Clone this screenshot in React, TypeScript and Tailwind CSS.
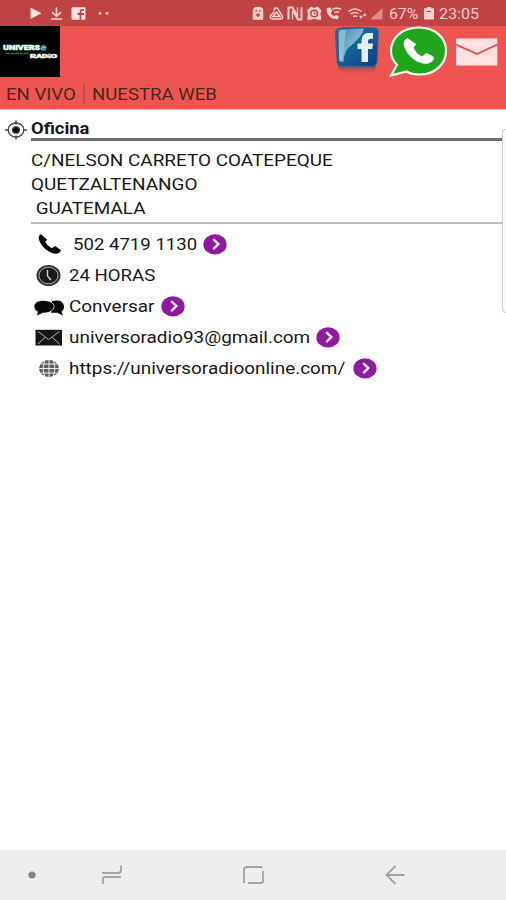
import React from 'react';

function Wide({ children, className = '', tight = false }: { children: React.ReactNode; className?: string; tight?: boolean }) {
  return (
    <span className={`block shrink-0 whitespace-pre ${className}`}>
      <span className={`inline-block origin-left ${tight ? 'scale-x-[1.094]' : 'scale-x-[1.113]'}`}>{children}</span>
    </span>
  );
}

function Arrow() {
  return (
    <svg className="h-[22px] w-6 shrink-0" viewBox="0 0 24 22" fill="none">
      <ellipse cx="12" cy="10.400" rx="11.6" ry="10.2" fill="#8e1a9f" />
      <path d="M10.2 5.2 15.4 10.100 10.2 15.2" stroke="#f4e6f6" strokeWidth="2.4" />
    </svg>
  );
}

function StatusBar() {
  return (
    <div className="flex h-[26px] items-center bg-[#bf4342] text-[#f5cfcd]">
      <svg className="h-[26px] w-[120px] shrink-0" viewBox="0 0 120 26" fill="none">
        <path d="M30.500 7.500V19L41.500 13.300Z" fill="#fbe3e1" />
        <path d="M56.500 7.500V16M52 12l4.500 4.300L61 12M51 19h11" stroke="#f5cfcd" strokeWidth="1.700" />
        <rect x="71.500" y="7.300" width="14" height="12.400" rx="1" fill="#fbe3e1" />
        <path d="M84 9.800h-1.500q-2 0-2 2V19.700M77.500 14H84" stroke="#bf4342" strokeWidth="1.800" />
        <circle cx="100" cy="13.300" r="1.500" fill="#efb8b5" />
        <circle cx="107" cy="13.300" r="1.500" fill="#efb8b5" />
      </svg>
      <svg className="ml-[130px] h-[26px] w-[136px] shrink-0" viewBox="250 0 136 26" fill="none" stroke="#f5cfcd" strokeWidth="1.500">
        <path d="M253.500 19V10.500q0-3 4.500-3t4.500 3V19Z" fill="#f5cfcd" />
        <path d="M255.500 11h1.500M259 11h1.500M258 13v4M256 15h4" stroke="#bf4342" />
        <path d="M274 10.500q0-2.500 2.300-2.500t2.300 2.500l3.800 5.500q.8 3-2.400 3h-7.500q-3-.4-2-3l3.800-4.500M273 16.500l3.500-4.500 3.500 4.500Z" />
        <path d="M288.500 19.500V7.500h4l5 9M301.500 7.500v12h-3.500l-5-9" strokeWidth="2" />
        <path d="M297.500 7.500v9M292.500 10.500v9" strokeWidth="1.300" />
        <path d="M308 10.500l3-3 2 1h2.500l2-1 3 3-.7 2v2.500l.7 4h-3l-1.500-.7h-3.500L311 19h-3l.5-4V12.500Z" fill="#f5cfcd" />
        <circle cx="314.200" cy="13.500" r="3.300" fill="#f5cfcd" stroke="#bf4342" />
        <path d="M314.200 11.500v2.300h2" stroke="#bf4342" strokeWidth="1" />
        <path d="M326.500 8q0 10.500 11 11.500l1.500-3.300-3-1.500-1.700 1.300q-3-1-3.500-3.500l1.500-1.400-1.800-3.600Z" fill="#f5cfcd" stroke="none" />
        <path d="M332.500 9.500q4-2.500 8.500 0M334.500 12.300q2.200-1.200 4.500 0" />
        <path d="M348.500 11.500q6.500-5 13 0M350.500 14q4.500-3 8 0M353 16.500q2-1.200 4 0" />
        <path d="m359.500 16 1.500 2.700 1.500-2.700ZM363.200 15.800l1.500-2.700 1.500 2.700Z" fill="#f5cfcd" strokeWidth=".5" />
        <path d="M382.500 8v11.500H370Z" fill="#dc8b88" stroke="none" />
      </svg>
      <span className="ml-[3px] w-[34px] whitespace-nowrap text-[15px] leading-[26px]">
        <span className="relative top-px inline-block origin-left scale-x-[1.05]">67%</span>
      </span>
      <svg className="h-[26px] w-3 shrink-0" viewBox="0 0 12 26">
        <path d="M3.800 7h4.400v1.200h2.800V19.500h-10V8.200h2.800Z" fill="#f5cfcd" />
        <path d="M4 11.500h4" stroke="#bf4342" />
      </svg>
      <span className="ml-1 whitespace-nowrap text-[15px] leading-[26px]">
        <span className="relative top-px inline-block origin-left scale-x-[1.07]">23:05</span>
      </span>
    </div>
  );
}

function Header() {
  return (
    <header className="h-[84px] border-b border-[#f0c5c2] bg-[#ee5551]">
      <div className="flex h-[52px]">
        <svg className="h-[51px] w-[60px] shrink-0 bg-black" viewBox="0 0 60 51">
          <g fontFamily="Roboto" fontWeight="900">
            <text x="3" y="24" fontSize="6.500" fill="#dfffee" stroke="#dfffee" strokeWidth=".5" textLength="37" lengthAdjust="spacingAndGlyphs">UNIVERS</text>
            <text x="30" y="31.500" fontSize="5.500" fill="#f5f8ee" stroke="#f5f8ee" strokeWidth=".5" textLength="27" lengthAdjust="spacingAndGlyphs">RADIO</text>
          </g>
          <circle cx="43.500" cy="22" r="3" fill="#2794aa" />
          <path d="M41 23.500q2-4 5-2" stroke="#9bded9" fill="none" />
          <path d="M6 27.500h23" stroke="#237b42" strokeWidth="1.700" strokeDasharray="4 .5" />
          <circle cx="49.500" cy="29" r="1.200" fill="#d4a349" />
        </svg>
        <svg className="ml-[274px] h-[52px] w-[50px] shrink-0" viewBox="333 26 50 52">
          <defs>
            <linearGradient id="fb" x1="0" y1="0" x2="1" y2="1">
              <stop offset="0" stopColor="#285f88" />
              <stop offset=".45" stopColor="#16639c" />
              <stop offset="1" stopColor="#073b83" />
            </linearGradient>
            <linearGradient id="shine" x1="0" y1="0" x2="1" y2="1">
              <stop offset="0" stopColor="#4784a4" />
              <stop offset=".5" stopColor="#75b6d0" />
              <stop offset="1" stopColor="#1e6da5" />
            </linearGradient>
            <linearGradient id="fade" x1="0" y1="0" x2="0" y2="1">
              <stop offset="0" stopColor="#793f54" stopOpacity=".8" />
              <stop offset="1" stopColor="#ee5551" stopOpacity="0" />
            </linearGradient>
          </defs>
          <path d="M337 66h38l-2 10h-34Z" fill="url(#fade)" />
          <path d="M339 28q18-1.500 34.500 0 4 .5 3.800 4l-1.300 30q-.3 4-4 4.200h-31.500q-4-.2-4.300-4L334.500 33q0-4.500 4.500-5Z" fill="url(#fb)" stroke="#2c6791" />
          <path d="M337 31q0-1.500 2-1.700l24-.7Q361 38 347 48q-4 5-4.500 14l-2.500-1q-1.500-.5-1.800-3Z" fill="url(#shine)" />
          <path d="M338 32v27q0 3 3 3l4-32h-5Z" fill="#9bd0df" opacity=".65" />
          <path d="M360.500 62V49h-4v-5.500h4V40.500q0-7.500 7-7.500h4.500v5.700h-2.500q-2.500 0-2.500 2.500v2.300h5l-.7 5.500h-4.300v13Z" fill="#e2effa" />
        </svg>
        <svg className="ml-[3px] h-[52px] w-[62px] shrink-0" viewBox="387 26 62 52">
          <path d="M419 27.500c16.500 0 27 10.500 27 23.500s-11 23.500-26.500 23.500c-5.500 0-9.500-1-13-3L391 75.500l6-10.500c-4-4-6-8.500-6-14 0-13 11-23.500 28-23.500Z" fill="#21a51c" stroke="#f1ffee" strokeWidth="2.200" />
          <path d="M407.500 38c-3.500 1.700-4.800 5-2.800 10 4 9.500 12.500 15.500 21.500 15.800 3.500 0 7.500-2.500 8-6.300 0-1-7-4.500-8-4.500l-4.300 3.500c-4-2-7-5.300-8.300-9.300l2.700-3Z" fill="white" />
        </svg>
        <svg className="ml-[7px] h-[52px] w-[42px] shrink-0" viewBox="456 26 42 52">
          <path d="M456 38.500h41.300v27H456Z" fill="#ffe1e1" />
          <path d="m456 44.500 21 9.500 20.300-9.500" fill="none" stroke="#e94b4c" strokeWidth="1.800" />
        </svg>
      </div>
      <nav className="flex h-8 items-center pl-[6px] text-[17px] leading-8 text-[#482725]">
        <Wide tight className="w-[77px]">EN VIVO</Wide>
        <span className="mr-[7px] h-5 w-[2px] bg-[#b9514e]" />
        <Wide tight>NUESTRA WEB</Wide>
      </nav>
    </header>
  );
}

const rowClass = 'flex h-[31px] items-center';

function Contact() {
  return (
    <main className="relative h-[740px] bg-white text-[17px] text-[#181818]">
      <div className="flex h-[31px]">
        <svg className="ml-[5px] mt-[9.5px] h-5 w-[22px] shrink-0" viewBox="0 0 22 20" fill="none" stroke="#444">
          <ellipse cx="11" cy="10" rx="7.800" ry="7" strokeWidth="1.300" />
          <ellipse cx="11" cy="10" rx="3.700" ry="3.400" fill="#111" />
          <path d="M0 10h4M18 10h4M11 .5v4M11 15.500v4" strokeWidth="1.500" />
        </svg>
        <div className="ml-[4px] h-[31px] grow border-b-[3px] border-[#6a6a6a] text-[16.5px] font-bold leading-[37px]">
          <Wide>Oficina</Wide>
        </div>
      </div>
      <div className="ml-[31px] h-[83px] border-b-2 border-[#bcbcbc] pt-[7px] leading-6">
        <Wide>C/NELSON CARRETO COATEPEQUE</Wide>
        <Wide>QUETZALTENANGO</Wide>
        <Wide> GUATEMALA</Wide>
      </div>
      <div className="pl-[33px] pt-[5px]">
        <div className={rowClass}>
          <svg className="mr-[8px] h-[22px] w-[32px] shrink-0" viewBox="33 234 32 22">
            <path d="M41 234.200c-2 1-3 2.500-2 5.500 2.500 7.500 9.500 13 16.500 14 2.700.3 4.800-1.300 5.500-3.500l-5.800-4.200-3.500 2.300q-4.700-2.500-6.500-6.500l2-2Z" fill="#080808" />
          </svg>
          <Wide tight className="w-[130px]">502 4719 1130</Wide>
          <Arrow />
        </div>
        <div className={rowClass}>
          <svg className="mr-[3.5px] h-[22px] w-[32px] shrink-0" viewBox="0 0 32 22">
            <ellipse cx="15.500" cy="10.500" rx="12" ry="10.500" fill="#333" />
            <ellipse cx="15.500" cy="10.500" rx="9.500" ry="8.300" fill="#191919" stroke="#aaa" strokeWidth="1" />
            <path d="M14.500 5v6l3.500 4" fill="none" stroke="#ccc" strokeWidth="1.400" />
          </svg>
          <Wide tight>24 HORAS</Wide>
        </div>
        <div className={rowClass}>
          <svg className="mr-[3.5px] h-[22px] w-[32px] shrink-0" viewBox="0 0 32 22">
            <path d="M19 5q11-2.500 12 5 .3 3.500-2.500 5.500l1.500 4.300-5.500-3H18Z" fill="#080808" />
            <path d="M10 4.500c6.500 0 11 2 11 6s-4.500 6.500-10.500 6.500L3.500 20l1-4.300Q1 14 1 11c0-4 3-6.500 9-6.500Z" fill="#080808" stroke="white" strokeWidth=".7" />
          </svg>
          <Wide className="w-[92.5px]">Conversar</Wide>
          <Arrow />
        </div>
        <div className={rowClass}>
          <svg className="mr-[3.5px] h-[22px] w-[32px] shrink-0" viewBox="0 0 32 22">
            <path d="M2.500 2.800h26.500v15.700H2.500Z" fill="#141414" />
            <path d="m5 4.500 10.700 8L26.500 4.500M5 17l7-6.500M26.500 17l-7-6.500" fill="none" stroke="#b7b7b7" />
          </svg>
          <Wide className="w-[247.5px]">universoradio93@gmail.com</Wide>
          <Arrow />
        </div>
        <div className={rowClass}>
          <svg className="mr-[3.5px] h-[22px] w-[32px] shrink-0" viewBox="0 0 32 22">
            <ellipse cx="16" cy="10.500" rx="10" ry="8.500" fill="#606060" />
            <path d="M16 2v17M11.500 3q-3 7.500 0 15M20.500 3q3 7.500 0 15M6 10.500h20M8 6h16M8 15h16" fill="none" stroke="#ededed" />
          </svg>
          <Wide className="w-[284.5px]">https://universoradioonline.com/</Wide>
          <Arrow />
        </div>
      </div>
      <div className="absolute right-0 top-[19px] h-[184px] w-1 rounded-l border border-r-0 border-[#cecece] bg-[#fafafa]" />
    </main>
  );
}

export default function App() {
  return (
    <div className="h-[900px] w-[506px] overflow-hidden bg-white font-[Roboto,sans-serif]">
      <StatusBar />
      <Header />
      <Contact />
      <footer className="flex h-[50px] items-center bg-[#eee]">
        <svg className="h-[50px] w-[506px]" viewBox="0 850 506 50" fill="none" stroke="#a3a3a3" strokeWidth="1.800">
          <circle cx="32" cy="875" r="3.600" fill="#858585" stroke="none" />
          <path d="M102 873h16q3 0 3-3v-4.500M103 884v-5q0-2 2-2h16" />
          <path d="M262.500 867H247q-3 0-3 3v13M248 883h13q2 0 2-2V871" />
          <path d="M404.500 875H387M395.500 866l-9 9 9 9" />
        </svg>
      </footer>
    </div>
  );
}
